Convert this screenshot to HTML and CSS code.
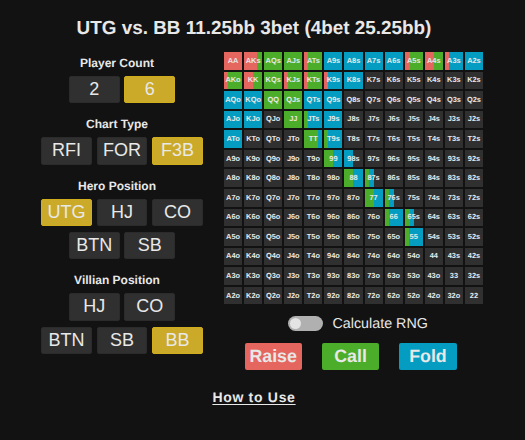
FILE: index.html
```
<!DOCTYPE html>
<html lang="en">
<head>
<meta charset="utf-8">
<title>Preflop Charts</title>
<link rel="stylesheet" href="styles.css">
</head>
<body>
<h1>UTG vs. BB 11.25bb 3bet (4bet 25.25bb)</h1>
<main>
  <div class="controls">
    <section><h2>Player Count</h2>
      <div class="options"><button>2</button><button class="on">6</button></div></section>
    <section><h2>Chart Type</h2>
      <div class="options"><button>RFI</button><button>FOR</button><button class="on">F3B</button></div></section>
    <section><h2>Hero Position</h2>
      <div class="options"><button class="on">UTG</button><button>HJ</button><button>CO</button></div>
      <div class="options"><button>BTN</button><button>SB</button></div></section>
    <section><h2>Villian Position</h2>
      <div class="options"><button>HJ</button><button>CO</button></div>
      <div class="options"><button>BTN</button><button>SB</button><button class="on">BB</button></div></section>
  </div>
  <div class="chart">
    <div class="grid" id="grid"></div>
    <div class="rng"><span class="switch"><span class="knob"></span></span><span class="rng-label">Calculate RNG</span></div>
    <div class="legend"><span class="raise">Raise</span><span class="call">Call</span><span class="fold">Fold</span></div>
  </div>
</main>
<footer><a href="#">How to Use</a></footer>
<script src="chart.js"></script>
</body>
</html>
```
FILE: styles.css
```
* { box-sizing: border-box; }
body {
  margin: 0;
  width: 525px;
  height: 440px;
  overflow: hidden;
  background: #121212;
  color: #e8e8e8;
  font-family: "Liberation Sans", Arial, sans-serif;
  text-rendering: geometricPrecision;
}
h1 {
  margin: 0;
  padding: 18px 17px 0 0;
  height: 52px;
  font-size: 18.9px;
  line-height: 22px;
  text-align: center;
  white-space: nowrap;
}
main { display: flex; padding-left: 41px; height: 334px; }
.controls { width: 162px; padding-top: 3px; }
section { margin-bottom: 13.2px; }
h2 {
  height: 16px;
  margin: 0 0 4.9px;
  padding-right: 10px;
  font-size: 12px;
  line-height: 16px;
  text-align: center;
}
.options { display: flex; justify-content: center; gap: 4.6px; margin-bottom: 6px; }
.options:last-child { margin-bottom: 0; }
button {
  width: 51px;
  height: 27.3px;
  padding: 0;
  border: 1px solid #2b2b2b;
  border-radius: 2px;
  background: #303030;
  color: #e8e8e8;
  font: 18px/25px "Liberation Sans", Arial, sans-serif;
}
button.on { background: #ccaa29; border-color: #d0ad1c; }
.chart { width: 260px; margin-left: 21px; }
.grid {
  display: grid;
  width: 259px;
  height: 252.4px;
  grid-template-columns: repeat(13, 1fr);
  grid-template-rows: repeat(13, 1fr);
  gap: 2px;
}
.cell {
  display: flex;
  align-items: center;
  justify-content: center;
  min-width: 0;
  background: #303030;
  font-size: 7.4px;
  font-weight: bold;
  line-height: 10px;
}
.rng { display: flex; align-items: center; height: 15px; margin: 11.6px 0 0 64px; }
.switch {
  display: flex;
  align-items: center;
  width: 35px;
  height: 15px;
  padding-left: 2px;
  border-radius: 8px;
  background: #b0b0b0;
}
.knob { width: 11px; height: 11px; border-radius: 50%; background: #e4e4e4; }
.rng-label { margin-left: 9.5px; padding-top: 1px; font-size: 14.3px; line-height: 18px; white-space: nowrap; }
.legend { display: flex; gap: 20.2px; margin: 12px 0 0 20.6px; }
.legend span {
  width: 57.2px;
  height: 27px;
  border-radius: 2px;
  font-size: 17.8px;
  font-weight: bold;
  line-height: 27px;
  text-align: center;
}
.legend .raise { background: #e5665f; }
.legend .call { background: #4cad2a; }
.legend .fold { background: #049dc1; }
footer { padding: 3px 17px 0 0; text-align: center; }
footer a {
  color: #e8e8e8;
  font-size: 14px;
  font-weight: bold;
  line-height: 16px;
  letter-spacing: 0.7px;
  text-decoration-skip-ink: none;
  text-underline-offset: 2px;
}
```
FILE: chart.js
```
const ranks = "AKQJT98765432";
const colors = { r: "#e5665f", c: "#4cad2a", f: "#049dc1", n: "#303030" };

// Percentages of raise / call / fold; what is left is outside the range.
const mix = {
  AA: [100, 0, 0], AKs: [75, 25, 0], AQs: [0, 100, 0], AJs: [0, 100, 0], ATs: [20, 80, 0],
  A9s: [0, 0, 100], A8s: [0, 0, 100], A7s: [0, 0, 100], A6s: [0, 0, 100],
  A5s: [25, 75, 0], A4s: [50, 50, 0], A3s: [22, 0, 78], A2s: [0, 0, 100],
  AKo: [22, 78, 0], KK: [50, 50, 0], KQs: [0, 100, 0], KJs: [22, 78, 0], KTs: [22, 78, 0],
  K9s: [22, 0, 78], K8s: [0, 0, 100],
  AQo: [0, 0, 100], KQo: [0, 0, 100], QQ: [0, 100, 0], QJs: [0, 100, 0], QTs: [0, 0, 100], Q9s: [0, 0, 100],
  AJo: [0, 0, 100], KJo: [0, 0, 100], JJ: [0, 100, 0], JTs: [0, 22, 78], J9s: [0, 0, 100],
  ATo: [0, 0, 100], TT: [0, 75, 25], T9s: [0, 22, 78],
  99: [0, 50, 50], "98s": [0, 0, 50], 88: [0, 50, 50], "87s": [0, 25, 25],
  77: [0, 50, 50], "76s": [0, 25, 25], 66: [0, 25, 75], "65s": [0, 25, 25], 55: [0, 22, 78]
};

const grid = document.getElementById("grid");
for (let row = 0; row < 13; row++) {
  for (let col = 0; col < 13; col++) {
    const name = row === col ? ranks[row] + ranks[row]
      : row < col ? ranks[row] + ranks[col] + "s"
      : ranks[col] + ranks[row] + "o";
    const cell = document.createElement("div");
    cell.className = "cell";
    cell.textContent = name;
    const m = mix[name];
    if (m) {
      const a = m[0], b = a + m[1], c = b + m[2];
      cell.style.background = `linear-gradient(90deg, ${colors.r} ${a}%, ${colors.c} ${a}% ${b}%, ${colors.f} ${b}% ${c}%, ${colors.n} ${c}%)`;
    }
    grid.appendChild(cell);
  }
}
```
